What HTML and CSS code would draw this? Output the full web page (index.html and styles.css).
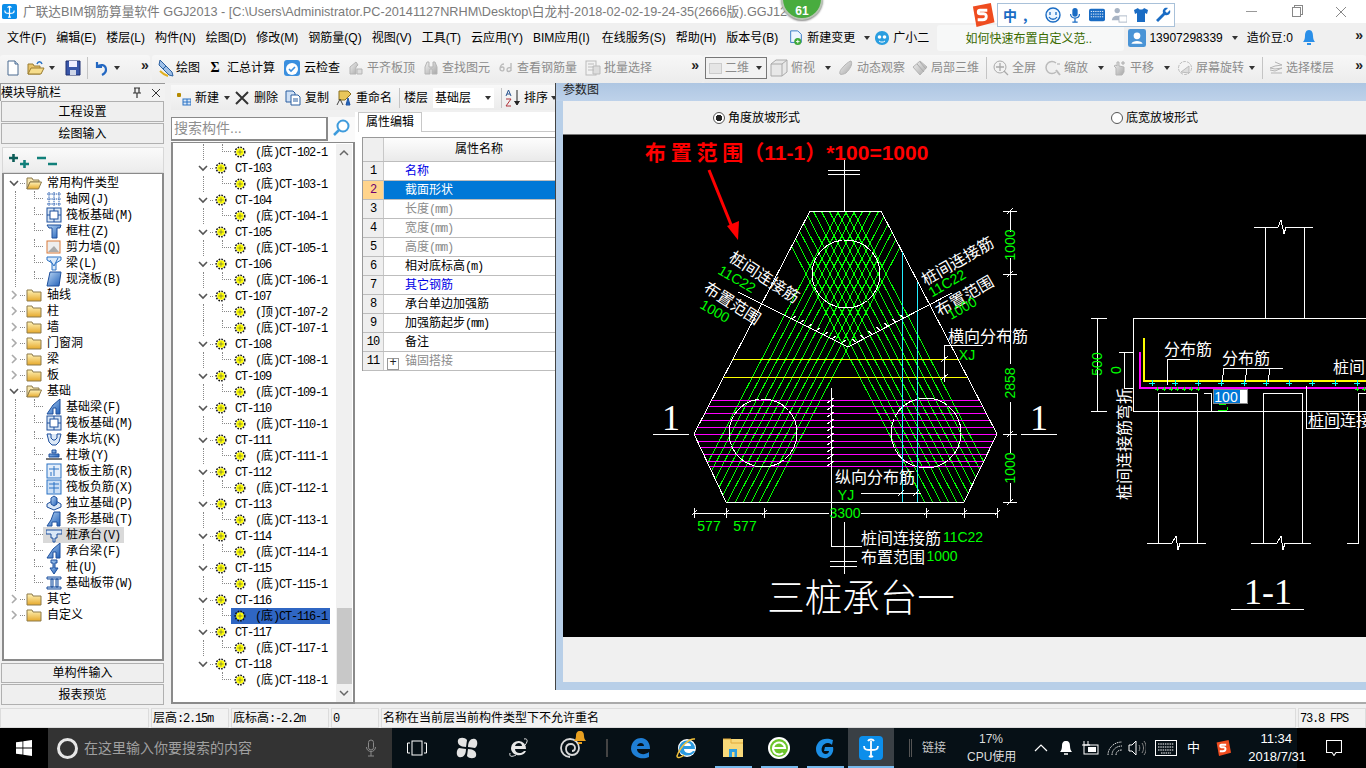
FILE: index.html
```html
<!DOCTYPE html>
<html lang="zh-CN">
<head>
<meta charset="utf-8">
<title>广联达BIM钢筋算量软件 GGJ2013</title>
<link rel="stylesheet" href="styles.css">
</head>
<body>
<svg class="sprite" aria-hidden="true">
  <defs>
    <linearGradient id="gold" x1="0" y1="0" x2="0" y2="1"><stop offset="0" stop-color="#fff3b8"/><stop offset="1" stop-color="#e6a92c"/></linearGradient>
    <linearGradient id="blu" x1="0" y1="0" x2="1" y2="1"><stop offset="0" stop-color="#bcd8f5"/><stop offset="1" stop-color="#1f5fb8"/></linearGradient>
    <linearGradient id="gry" x1="0" y1="0" x2="1" y2="1"><stop offset="0" stop-color="#f0f0f0"/><stop offset="1" stop-color="#a8a8a8"/></linearGradient>
    <symbol id="cd" viewBox="0 0 10 10"><path d="M1 3l4 4 4-4" fill="none" stroke="#555" stroke-width="1.6"/></symbol>
    <symbol id="cr" viewBox="0 0 10 10"><path d="M3 1l4 4-4 4" fill="none" stroke="#aaa" stroke-width="1.6"/></symbol>
    <symbol id="pile" viewBox="0 0 12 12"><circle cx="6" cy="6" r="3.8" fill="#ff0"/><circle cx="6" cy="6" r="4.8" fill="none" stroke="#111" stroke-width="1.5" stroke-dasharray="1.6 1.2"/><path d="M6 3.5v5M3.5 6h5" stroke="#555" stroke-width=".6"/></symbol>
    <symbol id="fold" viewBox="0 0 16 14"><path d="M1 2h5l1 2h8v9H1z" fill="url(#gold)" stroke="#8d7a4a"/></symbol>
    <symbol id="foldo" viewBox="0 0 16 14"><path d="M1 2h5l1 2h6v2H4L1 13z" fill="#f7e7b0" stroke="#8d7a4a"/><path d="M4 6h11.500l-3 7H1z" fill="url(#gold)" stroke="#8d7a4a"/></symbol>
    <symbol id="i-grid" viewBox="0 0 16 16"><path d="M1 3h14M1 8h14M1 13h14M3 1v14M8 1v14M13 1v14" stroke="#2a5fb0" fill="none" stroke-dasharray="1.500 .7"/></symbol>
    <symbol id="i-raft" viewBox="0 0 16 16"><rect x="1" y="1" width="14" height="14" fill="#dbe8f7" stroke="#1d4f9c"/><rect x="4" y="4" width="8" height="8" fill="#fff" stroke="#1d4f9c"/><path d="M8 1v3M8 12v3M1 8h3M12 8h3" stroke="#1d4f9c"/></symbol>
    <symbol id="i-col" viewBox="0 0 16 16"><path d="M1 2h14l-1 3h-3v10H6V5H3z" fill="url(#blu)" stroke="#1d4f9c"/></symbol>
    <symbol id="i-wall" viewBox="0 0 16 16"><rect x="1" y="2" width="13" height="12" fill="#eee" stroke="#d97a3a"/><path d="M2 13l6-6 5 6z" fill="#aaa"/></symbol>
    <symbol id="i-beam" viewBox="0 0 16 16"><path d="M1 2h14v3l-5 3v7H6V8L1 5z" fill="#d9e9fa" stroke="#2a72c4"/><path d="M4 5l4 6M12 3l-4 8" stroke="#2a72c4"/></symbol>
    <symbol id="i-slab" viewBox="0 0 16 16"><path d="M4 1h11l-2 14H1z" fill="url(#blu)" stroke="#1d4f9c"/></symbol>
    <symbol id="i-fb" viewBox="0 0 16 16"><path d="M1 15l6-9 7-6v15h-4V9H7v6z" fill="url(#blu)" stroke="#1d4f9c"/></symbol>
    <symbol id="i-sump" viewBox="0 0 16 16"><path d="M1 3h4v4l2 2h2l2-2V3h4M1 3l2 8 3 3h4l3-3 2-8" fill="#dbe8f7" stroke="#1d4f9c"/></symbol>
    <symbol id="i-pier" viewBox="0 0 16 16"><path d="M6 3h4v3H6zM3 7h10v3H3z" fill="url(#blu)" stroke="#1d4f9c"/><path d="M0 12h16" stroke="#777" stroke-width="2"/></symbol>
    <symbol id="i-rbar" viewBox="0 0 16 16"><rect x="1" y="1" width="14" height="14" fill="#e4eefa" stroke="#2a72c4"/><path d="M3 6h10M8 3v10M5 9v4" stroke="#2a72c4" fill="none"/></symbol>
    <symbol id="i-nbar" viewBox="0 0 16 16"><rect x="1" y="1" width="14" height="14" fill="#cbdff5" stroke="#2a72c4"/><path d="M3 5h10M3 9h10M8 3v11" stroke="#2a72c4" fill="none"/></symbol>
    <symbol id="i-ind" viewBox="0 0 16 16"><path d="M1 9l7-4 7 4v3l-7 3-7-3z" fill="#dbe8f7" stroke="#1d4f9c"/><path d="M5 3l3-2 3 2v6l-3 2-3-2z" fill="url(#blu)" stroke="#1d4f9c"/></symbol>
    <symbol id="i-strip" viewBox="0 0 16 16"><path d="M1 15l4-6 3-8h6v14h-3v-4H6v4z" fill="url(#blu)" stroke="#1d4f9c"/></symbol>
    <symbol id="i-cap" viewBox="0 0 16 16"><path d="M0 3h16v4H11v4H9v4H7v-4H5V7H0z" fill="#dbe8f7" stroke="#1d4f9c"/></symbol>
    <symbol id="i-pil" viewBox="0 0 16 16"><path d="M5 1h6v3h-2v5h3l-4 6-4-6h3V4H5z" fill="url(#blu)" stroke="#1d4f9c"/></symbol>
    <symbol id="i-band" viewBox="0 0 16 16"><path d="M1 2h14v2H1zM1 12h14v2H1zM5 4h2v8H5zM10 4h2v8h-2z" fill="#cfe2f7" stroke="#1d4f9c"/></symbol>
    <symbol id="i-add" viewBox="0 0 16 16"><path d="M2 5h4M4 3v4" stroke="#b58a00" stroke-width="3"/><rect x="8" y="9" width="8" height="6" fill="#dbe8f7" stroke="#2a72c4"/><path d="M8 12h8M12 9v6" stroke="#2a72c4"/></symbol>
    <symbol id="i-cut" viewBox="0 0 16 16"><path d="M2 2l12 12M14 2L2 14" stroke="#333" stroke-width="2"/></symbol>
    <symbol id="i-copy" viewBox="0 0 16 16"><path d="M1 1h7l2 2v9H1z" fill="#cfe0f5" stroke="#2a5fa0"/><path d="M6 5h7l2 2v8H6z" fill="#fff" stroke="#2a5fa0"/><path d="M8 9h5M8 11h5" stroke="#2a5fa0"/></symbol>
    <symbol id="i-ren" viewBox="0 0 16 16"><path d="M3 1h9l3 3-6 6H3z" fill="#e9c75b" stroke="#8a7020"/><path d="M1 15l3-6 3 6" fill="none" stroke="#444"/><path d="M10 15l2-7 2 7zM11 13h2" fill="#2c7ad6" stroke="#1d4f9c"/></symbol>
    <symbol id="i-sort" viewBox="0 0 18 18"><path d="M2 7l2.500-6L7 7M3 5h3" fill="none" stroke="#28548f"/><path d="M2 10h5l-5 7h5" fill="none" stroke="#b0333a"/><path d="M13 1v14M10.500 12l2.500 4 2.500-4" fill="#222" stroke="#222"/></symbol>
    <symbol id="i-new" viewBox="0 0 16 16"><path d="M3 1h7l3 3v11H3z" fill="#fff" stroke="#4a6a90"/><path d="M10 1v3h3" fill="#cde" stroke="#4a6a90"/></symbol>
    <symbol id="i-open" viewBox="0 0 18 16"><path d="M1 4h5l1 2h6v8H1z" fill="#e8c46c" stroke="#9a7c30"/><path d="M4 8h13l-3 6H1z" fill="#f6dd8c" stroke="#9a7c30"/><path d="M10 4c1-3 4-3 5 0" fill="none" stroke="#2a72c4" stroke-width="1.500"/></symbol>
    <symbol id="i-save" viewBox="0 0 16 16"><path d="M1 1h14v14H1z" fill="#3956a8" stroke="#1e2f70"/><rect x="4" y="1" width="8" height="6" fill="#eef"/><rect x="5" y="10" width="6" height="5" fill="#cfd6e8"/></symbol>
    <symbol id="i-undo" viewBox="0 0 16 16"><path d="M3 2v5h5M3 7c3-3 9-3 9 3 0 2-2 4-4 5" fill="none" stroke="#2468c2" stroke-width="2.200"/></symbol>
    <symbol id="i-draw" viewBox="0 0 18 18"><path d="M3 1l6 6-3 3-4-4zM9 7l6 6 1 4-4-1-6-6z" fill="#9fc0e8" stroke="#2a5fa0"/><path d="M3 12c2 2 4 4 8 5" stroke="#e0b020" fill="none" stroke-width="2"/></symbol>
    <symbol id="i-cloud" viewBox="0 0 18 18"><rect x="1" y="1" width="16" height="16" rx="3" fill="#3a8fdf"/><circle cx="9" cy="10" r="6" fill="#fff"/><path d="M6 10l2 2 4-4" fill="none" stroke="#3a8fdf" stroke-width="1.600"/></symbol>
    <symbol id="i-gflat" viewBox="0 0 16 16"><path d="M2 14V7l6-5 2 3-2 2v7z" fill="url(#gry)" stroke="#b5b5b5"/><path d="M9 9h5v5H9z" fill="#ddd" stroke="#b5b5b5"/></symbol>
    <symbol id="i-bino" viewBox="0 0 16 16"><path d="M2 7l2-5h2v5h4V2h2l2 5v7h-5V9H7v5H2z" fill="url(#gry)" stroke="#b5b5b5"/></symbol>
    <symbol id="i-six" viewBox="0 0 16 16"><path d="M6 4c-3 0-4 3-4 5s4 3 4 0-3-2-4-1M13 3v8M13 8c-2-1-4 0-4 2s3 2 4 0" fill="none" stroke="#bbb" stroke-width="1.400"/></symbol>
    <symbol id="i-batch" viewBox="0 0 16 16"><rect x="1" y="1" width="10" height="14" fill="#f2f2f2" stroke="#bbb"/><path d="M3 4h6M3 7h6M3 10h6M8 6h7v8H8z" fill="#ddd" stroke="#bbb"/></symbol>
    <symbol id="i-cube" viewBox="0 0 18 18"><path d="M1 5l5-4h11v12l-5 4H1z" fill="#e8e8e8" stroke="#aaa"/><path d="M1 5h11v12M12 5l5-4" fill="none" stroke="#aaa"/></symbol>
    <symbol id="i-orb" viewBox="0 0 16 16"><path d="M13 1c2 3-1 8-5 12-2 1-5 2-6 1-1-3 2-6 5-9 2-2 5-4 6-4z" fill="url(#gry)" stroke="#b5b5b5"/></symbol>
    <symbol id="i-loc" viewBox="0 0 16 16"><path d="M1 7l7-6 7 6-7 8z" fill="url(#gry)" stroke="#b5b5b5"/><path d="M5 4l7 8M8 2l6 7" stroke="#aaa"/></symbol>
    <symbol id="i-full" viewBox="0 0 16 16"><circle cx="7" cy="7" r="6" fill="#f2f2f2" stroke="#aaa"/><path d="M7 3v8M3 7h8M11 11l4 4" stroke="#aaa" stroke-width="1.300"/></symbol>
    <symbol id="i-zoom" viewBox="0 0 16 16"><path d="M11 3a6 6 0 1 0 0 9" fill="#f0f0f0" stroke="#bbb" stroke-width="1.500"/><path d="M11 10l4 5" stroke="#bbb" stroke-width="2"/><path d="M12 4h3" stroke="#aaa"/></symbol>
    <symbol id="i-pan" viewBox="0 0 16 16"><path d="M5 15V8L3 6l2-1 1 1V2h2v4l5 1v5l-2 3z" fill="url(#gry)" stroke="#b5b5b5"/><path d="M12 1v4M10 3h4" stroke="#aaa"/></symbol>
    <symbol id="i-rot" viewBox="0 0 16 16"><circle cx="8" cy="8" r="6.500" fill="#f4f4f4" stroke="#bbb" stroke-dasharray="3 1"/><path d="M4 12l8-6v7z" fill="#ddd" stroke="#bbb"/></symbol>
    <symbol id="i-floor" viewBox="0 0 14 14"><path d="M6 1l7 3-7 1-5 2 5 1 7-1-7 3-5-1M2 12h11" fill="none" stroke="#b5b5b5"/></symbol>
    <symbol id="i-win" viewBox="0 0 16 16"><path d="M0 2.300l6.500-.9v6.200H0zM7.300 1.300L16 0v7.600H7.300zM0 8.400h6.500v6.200L0 13.700zM7.300 8.400H16V16l-8.700-1.300z" fill="#fff"/></symbol>
    <symbol id="i-mic" viewBox="0 0 12 18"><rect x="3.500" y="1" width="5" height="10" rx="2.500" fill="none" stroke="#8a8a8a"/><path d="M1.500 8c0 6 9 6 9 0M6 13v4M3 17h6" fill="none" stroke="#8a8a8a"/></symbol>
    <symbol id="i-tv" viewBox="0 0 20 16"><rect x="5" y="1" width="10" height="14" fill="none" stroke="#fff"/><path d="M3 3H.500v10H3M17 3h2.500v10H17" fill="none" stroke="#fff"/></symbol>
    <symbol id="i-pin" viewBox="0 0 22 22"><g fill="#e4e4e4"><path d="M10 10C4 10 1 7 2 3c1-3 7-3 9 0z"/><path d="M12 10c0-6 3-9 7-8 3 1 3 7 0 9z"/><path d="M12 12c6 0 9 3 8 7-1 3-7 3-9 0z"/><path d="M10 12c0 6-3 9-7 8-3-1-3-7 0-9z"/></g></symbol>
    <symbol id="i-ie" viewBox="0 0 22 22"><path d="M4 11a7.500 7.500 0 1 1 15 1H8c0 5 7 5 9 2h2c-3 7-15 5-15-3zM8 9h7c0-4-6-4-7 0z" fill="#e8e8e8"/><path d="M17 2c4-1 4 3 1 6M3 16c-1 4 2 4 6 2" fill="none" stroke="#e8e8e8"/></symbol>
    <symbol id="i-spi" viewBox="0 0 22 22"><path d="M11 20a9 9 0 1 1 9-9c0 4-3 7-7 7a6 6 0 0 1-6-6c0-3 2-5 5-5a4 4 0 0 1 4 4c0 2-1 3-3 3" fill="none" stroke="#d8d8d8" stroke-width="1.800"/></symbol>
    <symbol id="i-gbell" viewBox="0 0 12 14"><path d="M6 0c3 0 4 2 4 5 0 2 1 4 2 5H0c1-1 2-3 2-5 0-3 1-5 4-5z" fill="#e8a020"/><path d="M4 12h4" stroke="#e8a020" stroke-width="2"/></symbol>
    <symbol id="i-edge" viewBox="0 0 22 22"><path d="M2 12C2 4 8 1 12 1c6 0 9 5 9 11H8c0 5 7 7 12 3v5c-6 3-17 1-18-8zM8 9h7c0-4-6-4-7 0z" fill="#1f7fd6"/></symbol>
    <symbol id="i-ie2" viewBox="0 0 24 24"><circle cx="12" cy="12" r="9" fill="#fff"/><path d="M4 12a8 8 0 1 1 16 1H9c0 5 7 5 9 2h2c-3 7-16 6-16-3zM9 10h7c0-4-6-4-7 0z" fill="#2b9ae0"/><path d="M20 3c-5-1-14 6-18 17 0 3 5 1 7-1" fill="none" stroke="#f3c23a" stroke-width="1.500"/></symbol>
    <symbol id="i-exp" viewBox="0 0 22 22"><path d="M1 2h20v18H1z" fill="#f7d97a"/><path d="M1 2h8v4h12" fill="none" stroke="#e0a93a"/><rect x="7" y="12" width="8" height="8" fill="#2a9ee0"/><rect x="10" y="15" width="2.500" height="5" fill="#f7d97a"/></symbol>
    <symbol id="i-gre" viewBox="0 0 24 24"><circle cx="12" cy="12" r="11" fill="#fff"/><circle cx="12" cy="12" r="9" fill="#6cc52c"/><path d="M6 12h12a6 6 0 1 0-2 5" fill="none" stroke="#fff" stroke-width="2.200"/></symbol>
    <symbol id="i-g" viewBox="0 0 24 24"><path d="M20 4C10 0 3 6 3 13c0 7 6 10 11 9 5-2 7-7 6-11h-8l-1 4h5c0 3-4 4-6 2-3-3-1-10 5-10 2 0 3 1 4 2z" fill="#1c8fe6"/></symbol>
    <symbol id="i-glod" viewBox="0 0 24 24"><rect x="0" y="0" width="24" height="24" rx="4" fill="#0c8eea"/><path d="M5 10c0 4 3 4 7 4s7 0 7-4M12 5v15M10 20a3 3 0 0 0 4 0" fill="none" stroke="#fff" stroke-width="1.800"/><path d="M9 5c1-2 5-2 6 0" fill="none" stroke="#fff" stroke-width="1.800"/></symbol>
    <symbol id="i-up" viewBox="0 0 14 10"><path d="M1 8l6-6 6 6" fill="none" stroke="#fff" stroke-width="1.200"/></symbol>
    <symbol id="i-bell" viewBox="0 0 14 16"><path d="M7 1c3 0 4 2 4 5 0 3 1 5 2 6H1c1-1 2-3 2-6 0-3 1-5 4-5z" fill="#fff"/><path d="M5 14h4" stroke="#fff" stroke-width="1.500"/></symbol>
    <symbol id="i-batt" viewBox="0 0 18 16"><rect x="3" y="5" width="14" height="9" fill="none" stroke="#fff"/><rect x="7" y="7" width="8" height="5" fill="#fff"/><path d="M3 1v4M7 1v4M1 5h8" stroke="#fff"/></symbol>
    <symbol id="i-wifi" viewBox="0 0 18 16"><g fill="none" stroke="#ddd" stroke-dasharray="1.500 .8"><path d="M1 15c0-7 6-13 14-13"/><path d="M5 15c0-5 4-9 10-9"/><path d="M9 15c0-3 2-5 6-5"/></g></symbol>
    <symbol id="i-vol" viewBox="0 0 18 16"><path d="M1 5h3l4-4v14l-4-4H1z" fill="none" stroke="#fff"/><path d="M11 5c1 2 1 4 0 6M14 3c2 3 2 7 0 10M16 1c3 4 3 10 0 14" fill="none" stroke="#888"/></symbol>
    <symbol id="i-kb" viewBox="0 0 22 16"><rect x=".5" y=".5" width="21" height="15" fill="none" stroke="#fff"/><path d="M3 4h16M3 7h16M3 10h16M6 13h10" stroke="#fff" stroke-dasharray="1.500 .8"/></symbol>
    <symbol id="i-s" viewBox="0 0 20 20"><path d="M2 3l15-3 3 16-15 4z" fill="#ef4c1f"/><path d="M14 6H8c-2 0-2 3 0 3h3c3 0 3 5-1 5H6" fill="none" stroke="#fff" stroke-width="2.400"/></symbol>
    <symbol id="i-note" viewBox="0 0 16 16"><path d="M.5.500h15v12H10l-2 3-2-3H.500z" fill="none" stroke="#fff" stroke-width="1.100"/></symbol>
    <symbol id="i-logo" viewBox="0 0 16 16"><rect width="16" height="16" rx="2" fill="#0c8eea"/><path d="M3 7c0 3 2 3 5 3s5 0 5-3M8 3v11M6.500 14h3M6 4c1-2 3-2 4 0" fill="none" stroke="#fff" stroke-width="1.300"/></symbol>
    <symbol id="i-file" viewBox="0 0 14 18"><path d="M1 1h8l4 4v9H1z" fill="#eef5ff" stroke="#2a72c4"/><circle cx="9" cy="13" r="4" fill="#3fa83a"/><path d="M7 13h4M9 11v4" stroke="#fff"/></symbol>
    <symbol id="i-xiao" viewBox="0 0 16 16"><path d="M8 1c4 0 7 3 7 7s-3 7-7 7-7-3-7-7 3-7 7-7z" fill="#2a9ee0"/><circle cx="5.500" cy="7" r="1.800" fill="#fff"/><circle cx="10.500" cy="7" r="1.800" fill="#fff"/><path d="M5 11c2 1.500 4 1.500 6 0" fill="none" stroke="#fff"/></symbol>
    <symbol id="i-ava" viewBox="0 0 16 16"><rect width="16" height="16" rx="2" fill="#4a94d6"/><circle cx="8" cy="6" r="3" fill="#fff"/><path d="M3 13c1-3 9-3 10 0z" fill="#fff"/></symbol>
    <symbol id="i-bl" viewBox="0 0 12 16"><path d="M6 0c3 0 4 3 4 6 0 3 1 5 2 6H0c1-1 2-3 2-6 0-3 1-6 4-6z" fill="#2a8fe8"/><path d="M4 14h4" stroke="#2a8fe8" stroke-width="2"/></symbol>
    <symbol id="i-mag" viewBox="0 0 18 18"><circle cx="11" cy="7" r="5.500" fill="#fff" stroke="#3e9bdc" stroke-width="2"/><path d="M7 11l-5 5" stroke="#3e9bdc" stroke-width="2.500"/></symbol>
    <symbol id="i-plus" viewBox="0 0 22 16"><path d="M1 5h9M5.500 1v8" stroke="#0d5d58" stroke-width="2.600"/><path d="M12 11h9M16.500 7v8" stroke="#11807a" stroke-width="2.600"/></symbol>
    <symbol id="i-minus" viewBox="0 0 22 16"><path d="M1 5h9M12 11h9" stroke="#11807a" stroke-width="2.600"/></symbol>
    <symbol id="i-pin2" viewBox="0 0 12 12"><path d="M3 1h6M4 1v5M8 1v5M2 6h8M6 6v5" fill="none" stroke="#333" stroke-width="1.200"/></symbol>
    <symbol id="i-x" viewBox="0 0 12 12"><path d="M2 2l8 8M10 2l-8 8" stroke="#333"/></symbol>
    <symbol id="i-shirt" viewBox="0 0 16 16"><path d="M5 1L1 3l1 4 2-1v9h8V6l2 1 1-4-4-2c-1 2-5 2-6 0z" fill="#1a6cc4"/></symbol>
    <symbol id="i-wr" viewBox="0 0 16 16"><path d="M15 3l-3 3-2-2 3-3c-3-1-6 1-5 5L1 13l2 2 7-7c4 1 6-2 5-5z" fill="#1a6cc4"/></symbol>
    <symbol id="i-smile" viewBox="0 0 16 16"><circle cx="8" cy="8" r="7" fill="#eef6ff" stroke="#1a6cc4" stroke-width="1.400"/><path d="M5 5v3M11 5v3M4 10c2 3 6 3 8 0" fill="none" stroke="#1a6cc4" stroke-width="1.300"/></symbol>
    <symbol id="i-mic2" viewBox="0 0 12 18"><rect x="3" y="1" width="6" height="10" rx="3" fill="#1a6cc4"/><path d="M1 8c0 6 10 6 10 0M6 13v4M3 17h6" fill="none" stroke="#1a6cc4" stroke-width="1.400"/></symbol>
    <symbol id="i-kb2" viewBox="0 0 18 14"><rect x="0" y="0" width="18" height="14" rx="2" fill="#1a6cc4"/><path d="M2 3h14M2 6h14M2 9h14" stroke="#fff" stroke-dasharray="1.500 1"/></symbol>
    <symbol id="i-per" viewBox="0 0 18 18"><circle cx="7" cy="4" r="3" fill="#a8b4c4"/><path d="M1 15c0-7 11-7 11 0z" fill="#a8b4c4"/><rect x="9" y="10" width="9" height="7" fill="#fff" stroke="#a8b4c4"/></symbol>
  </defs>
</svg>

<div class="app">
  <header class="titlebar">
    <svg class="logo"><use href="#i-logo"/></svg>
    <span class="ttl">广联达BIM钢筋算量软件 GGJ2013 - [C:\Users\Administrator.PC-20141127NRHM\Desktop\白龙村-2018-02-02-19-24-35(2666版).GGJ12</span>
    <div class="wctl">
      <span class="wmin"></span><span class="wmax"></span><svg class="wx" viewBox="0 0 10 10"><path d="M0 0l10 10M10 0L0 10" stroke="#888"/></svg>
    </div>
  </header>

  <nav class="menubar">
    <span>文件(F)</span><span>编辑(E)</span><span>楼层(L)</span><span>构件(N)</span><span>绘图(D)</span><span>修改(M)</span><span>钢筋量(Q)</span><span>视图(V)</span><span>工具(T)</span><span>云应用(Y)</span><span>BIM应用(I)</span><span class="m-svc">在线服务(S)</span><span>帮助(H)</span><span>版本号(B)</span>
    <span class="ti"><svg class="ic16"><use href="#i-file"/></svg>新建变更<b class="caret"></b></span>
    <span class="ti m-xiao"><svg class="ic16"><use href="#i-xiao"/></svg>广小二</span>
    <div class="news">如何快速布置自定义范..</div>
    <span class="ti"><svg class="ic18"><use href="#i-ava"/></svg>13907298339<b class="caret"></b></span>
    <span class="bean">造价豆:0</span>
    <svg class="ic-bl"><use href="#i-bl"/></svg>
    <span class="more more-m">»</span>
  </nav>

  <div class="toolbar">
    <div class="tbgroup tg1">
      <svg class="ic16"><use href="#i-new"/></svg>
      <svg class="ic18"><use href="#i-open"/></svg><b class="caret c0"></b>
      <svg class="ic16 save"><use href="#i-save"/></svg>
      <i class="sep"></i>
      <svg class="ic16"><use href="#i-undo"/></svg><b class="caret c0"></b>
      <span class="more more-a">»</span>
    </div>
    <div class="tbgroup tg2">
      <span class="ti t-first"><svg class="ic18"><use href="#i-draw"/></svg>绘图</span>
      <span class="ti sig"><em>Σ</em>汇总计算</span>
      <span class="ti"><svg class="ic18"><use href="#i-cloud"/></svg>云检查</span>
      <span class="ti off"><svg class="ic16"><use href="#i-gflat"/></svg>平齐板顶</span>
      <span class="ti off"><svg class="ic16"><use href="#i-bino"/></svg>查找图元</span>
      <span class="ti off"><svg class="ic16"><use href="#i-six"/></svg>查看钢筋量</span>
      <span class="ti off"><svg class="ic16"><use href="#i-batch"/></svg>批量选择</span>
      <span class="more more-b">»</span>
    </div>
    <div class="tbgroup tg3">
      <div class="combo"><i class="sq"></i>二维<b class="caret"></b></div>
      <span class="ti off"><svg class="ic18"><use href="#i-cube"/></svg>俯视<b class="caret"></b></span>
      <span class="ti off"><svg class="ic16"><use href="#i-orb"/></svg>动态观察</span>
      <span class="ti off"><svg class="ic16"><use href="#i-loc"/></svg>局部三维</span>
      <i class="sep"></i>
      <span class="ti off"><svg class="ic16"><use href="#i-full"/></svg>全屏</span>
      <span class="ti off zm"><svg class="ic16"><use href="#i-zoom"/></svg>缩放<b class="caret"></b></span>
      <span class="ti off"><svg class="ic16"><use href="#i-pan"/></svg>平移<b class="caret"></b></span>
      <span class="ti off"><svg class="ic16"><use href="#i-rot"/></svg>屏幕旋转<b class="caret ca2"></b></span>
      <i class="sep"></i>
      <span class="ti off"><svg class="ic14"><use href="#i-floor"/></svg>选择楼层</span>
      <span class="more more-c">»</span>
    </div>
  </div>

  <main class="workspace">
    <aside class="nav">
      <div class="navhead"><span>模块导航栏</span><svg class="ic12 pin"><use href="#i-pin2"/></svg><svg class="ic12"><use href="#i-x"/></svg></div>
      <button class="navbtn">工程设置</button>
      <button class="navbtn">绘图输入</button>
      <div class="navtools"><svg class="ic-pm"><use href="#i-plus"/></svg><svg class="ic-pm"><use href="#i-minus"/></svg></div>
      <div class="tree ltree">
        <div class="lr"><svg class="chev"><use href="#cd"/></svg><i class="stub"></i><svg class="fold"><use href="#foldo"/></svg><span>常用构件类型</span></div>
        <div class="lc"><i class="guide"></i><i class="elbow"></i><div class="lbl"><svg class="ic16"><use href="#i-grid"/></svg><span>轴网<i>(J)</i></span></div></div>
        <div class="lc"><i class="guide"></i><i class="elbow"></i><div class="lbl"><svg class="ic16"><use href="#i-raft"/></svg><span>筏板基础<i>(M)</i></span></div></div>
        <div class="lc"><i class="guide"></i><i class="elbow"></i><div class="lbl"><svg class="ic16"><use href="#i-col"/></svg><span>框柱<i>(Z)</i></span></div></div>
        <div class="lc"><i class="guide"></i><i class="elbow"></i><div class="lbl"><svg class="ic16"><use href="#i-wall"/></svg><span>剪力墙<i>(Q)</i></span></div></div>
        <div class="lc"><i class="guide"></i><i class="elbow"></i><div class="lbl"><svg class="ic16"><use href="#i-beam"/></svg><span>梁<i>(L)</i></span></div></div>
        <div class="lc"><i class="guide"></i><i class="elbow"></i><div class="lbl"><svg class="ic16"><use href="#i-slab"/></svg><span>现浇板<i>(B)</i></span></div></div>
        <div class="lr"><svg class="chev"><use href="#cr"/></svg><i class="stub"></i><svg class="fold"><use href="#fold"/></svg><span>轴线</span></div>
        <div class="lr"><svg class="chev"><use href="#cr"/></svg><i class="stub"></i><svg class="fold"><use href="#fold"/></svg><span>柱</span></div>
        <div class="lr"><svg class="chev"><use href="#cr"/></svg><i class="stub"></i><svg class="fold"><use href="#fold"/></svg><span>墙</span></div>
        <div class="lr"><svg class="chev"><use href="#cr"/></svg><i class="stub"></i><svg class="fold"><use href="#fold"/></svg><span>门窗洞</span></div>
        <div class="lr"><svg class="chev"><use href="#cr"/></svg><i class="stub"></i><svg class="fold"><use href="#fold"/></svg><span>梁</span></div>
        <div class="lr"><svg class="chev"><use href="#cr"/></svg><i class="stub"></i><svg class="fold"><use href="#fold"/></svg><span>板</span></div>
        <div class="lr"><svg class="chev"><use href="#cd"/></svg><i class="stub"></i><svg class="fold"><use href="#foldo"/></svg><span>基础</span></div>
        <div class="lc"><i class="guide"></i><i class="elbow"></i><div class="lbl"><svg class="ic16"><use href="#i-fb"/></svg><span>基础梁<i>(F)</i></span></div></div>
        <div class="lc"><i class="guide"></i><i class="elbow"></i><div class="lbl"><svg class="ic16"><use href="#i-raft"/></svg><span>筏板基础<i>(M)</i></span></div></div>
        <div class="lc"><i class="guide"></i><i class="elbow"></i><div class="lbl"><svg class="ic16"><use href="#i-sump"/></svg><span>集水坑<i>(K)</i></span></div></div>
        <div class="lc"><i class="guide"></i><i class="elbow"></i><div class="lbl"><svg class="ic16"><use href="#i-pier"/></svg><span>柱墩<i>(Y)</i></span></div></div>
        <div class="lc"><i class="guide"></i><i class="elbow"></i><div class="lbl"><svg class="ic16"><use href="#i-rbar"/></svg><span>筏板主筋<i>(R)</i></span></div></div>
        <div class="lc"><i class="guide"></i><i class="elbow"></i><div class="lbl"><svg class="ic16"><use href="#i-nbar"/></svg><span>筏板负筋<i>(X)</i></span></div></div>
        <div class="lc"><i class="guide"></i><i class="elbow"></i><div class="lbl"><svg class="ic16"><use href="#i-ind"/></svg><span>独立基础<i>(P)</i></span></div></div>
        <div class="lc"><i class="guide"></i><i class="elbow"></i><div class="lbl"><svg class="ic16"><use href="#i-strip"/></svg><span>条形基础<i>(T)</i></span></div></div>
        <div class="lc"><i class="guide"></i><i class="elbow"></i><div class="lbl hov"><svg class="ic16"><use href="#i-cap"/></svg><span>桩承台<i>(V)</i></span></div></div>
        <div class="lc"><i class="guide"></i><i class="elbow"></i><div class="lbl"><svg class="ic16"><use href="#i-fb"/></svg><span>承台梁<i>(F)</i></span></div></div>
        <div class="lc"><i class="guide"></i><i class="elbow"></i><div class="lbl"><svg class="ic16"><use href="#i-pil"/></svg><span>桩<i>(U)</i></span></div></div>
        <div class="lc"><i class="guide"></i><i class="elbow"></i><div class="lbl"><svg class="ic16"><use href="#i-band"/></svg><span>基础板带<i>(W)</i></span></div></div>
        <div class="lr"><svg class="chev"><use href="#cr"/></svg><i class="stub"></i><svg class="fold"><use href="#fold"/></svg><span>其它</span></div>
        <div class="lr"><svg class="chev"><use href="#cr"/></svg><i class="stub"></i><svg class="fold"><use href="#fold"/></svg><span>自定义</span></div>
      </div>
      <button class="navbtn b1">单构件输入</button>
      <button class="navbtn">报表预览</button>
    </aside>

    <section class="mid">
      <div class="midtools">
        <span class="ti"><svg class="ic16"><use href="#i-add"/></svg>新建<b class="caret"></b></span>
        <span class="ti"><svg class="ic16"><use href="#i-cut"/></svg>删除</span>
        <span class="ti"><svg class="ic16"><use href="#i-copy"/></svg>复制</span>
        <span class="ti"><svg class="ic16"><use href="#i-ren"/></svg>重命名</span>
        <i class="sep"></i>
        <span>楼层</span>
        <div class="floorbox">基础层<b class="caret"></b></div>
        <i class="sep"></i>
        <span class="ti"><svg class="ic18"><use href="#i-sort"/></svg>排序<b class="caret"></b></span>
      </div>
      <div class="midbody">
        <div class="compcol">
          <div class="searchrow"><div class="search">搜索构件...</div><svg class="ic-mag"><use href="#i-mag"/></svg></div>
          <div class="tree ctree">
            <div class="rows">
              <div class="cc"><i class="guide"></i><i class="elbow"></i><div class="lbl"><svg class="ic12t"><use href="#pile"/></svg><span><i>(</i>底<i>)CT-102-1</i></span></div></div>
              <div class="cp"><svg class="chev"><use href="#cd"/></svg><i class="stub"></i><svg class="ic12t"><use href="#pile"/></svg><span><i>CT-103</i></span></div>
              <div class="cc"><i class="guide"></i><i class="elbow"></i><div class="lbl"><svg class="ic12t"><use href="#pile"/></svg><span><i>(</i>底<i>)CT-103-1</i></span></div></div>
              <div class="cp"><svg class="chev"><use href="#cd"/></svg><i class="stub"></i><svg class="ic12t"><use href="#pile"/></svg><span><i>CT-104</i></span></div>
              <div class="cc"><i class="guide"></i><i class="elbow"></i><div class="lbl"><svg class="ic12t"><use href="#pile"/></svg><span><i>(</i>底<i>)CT-104-1</i></span></div></div>
              <div class="cp"><svg class="chev"><use href="#cd"/></svg><i class="stub"></i><svg class="ic12t"><use href="#pile"/></svg><span><i>CT-105</i></span></div>
              <div class="cc"><i class="guide"></i><i class="elbow"></i><div class="lbl"><svg class="ic12t"><use href="#pile"/></svg><span><i>(</i>底<i>)CT-105-1</i></span></div></div>
              <div class="cp"><svg class="chev"><use href="#cd"/></svg><i class="stub"></i><svg class="ic12t"><use href="#pile"/></svg><span><i>CT-106</i></span></div>
              <div class="cc"><i class="guide"></i><i class="elbow"></i><div class="lbl"><svg class="ic12t"><use href="#pile"/></svg><span><i>(</i>底<i>)CT-106-1</i></span></div></div>
              <div class="cp"><svg class="chev"><use href="#cd"/></svg><i class="stub"></i><svg class="ic12t"><use href="#pile"/></svg><span><i>CT-107</i></span></div>
              <div class="cc"><i class="guide"></i><i class="elbow"></i><div class="lbl"><svg class="ic12t"><use href="#pile"/></svg><span><i>(</i>顶<i>)CT-107-2</i></span></div></div>
              <div class="cc"><i class="guide"></i><i class="elbow"></i><div class="lbl"><svg class="ic12t"><use href="#pile"/></svg><span><i>(</i>底<i>)CT-107-1</i></span></div></div>
              <div class="cp"><svg class="chev"><use href="#cd"/></svg><i class="stub"></i><svg class="ic12t"><use href="#pile"/></svg><span><i>CT-108</i></span></div>
              <div class="cc"><i class="guide"></i><i class="elbow"></i><div class="lbl"><svg class="ic12t"><use href="#pile"/></svg><span><i>(</i>底<i>)CT-108-1</i></span></div></div>
              <div class="cp"><svg class="chev"><use href="#cd"/></svg><i class="stub"></i><svg class="ic12t"><use href="#pile"/></svg><span><i>CT-109</i></span></div>
              <div class="cc"><i class="guide"></i><i class="elbow"></i><div class="lbl"><svg class="ic12t"><use href="#pile"/></svg><span><i>(</i>底<i>)CT-109-1</i></span></div></div>
              <div class="cp"><svg class="chev"><use href="#cd"/></svg><i class="stub"></i><svg class="ic12t"><use href="#pile"/></svg><span><i>CT-110</i></span></div>
              <div class="cc"><i class="guide"></i><i class="elbow"></i><div class="lbl"><svg class="ic12t"><use href="#pile"/></svg><span><i>(</i>底<i>)CT-110-1</i></span></div></div>
              <div class="cp"><svg class="chev"><use href="#cd"/></svg><i class="stub"></i><svg class="ic12t"><use href="#pile"/></svg><span><i>CT-111</i></span></div>
              <div class="cc"><i class="guide"></i><i class="elbow"></i><div class="lbl"><svg class="ic12t"><use href="#pile"/></svg><span><i>(</i>底<i>)CT-111-1</i></span></div></div>
              <div class="cp"><svg class="chev"><use href="#cd"/></svg><i class="stub"></i><svg class="ic12t"><use href="#pile"/></svg><span><i>CT-112</i></span></div>
              <div class="cc"><i class="guide"></i><i class="elbow"></i><div class="lbl"><svg class="ic12t"><use href="#pile"/></svg><span><i>(</i>底<i>)CT-112-1</i></span></div></div>
              <div class="cp"><svg class="chev"><use href="#cd"/></svg><i class="stub"></i><svg class="ic12t"><use href="#pile"/></svg><span><i>CT-113</i></span></div>
              <div class="cc"><i class="guide"></i><i class="elbow"></i><div class="lbl"><svg class="ic12t"><use href="#pile"/></svg><span><i>(</i>底<i>)CT-113-1</i></span></div></div>
              <div class="cp"><svg class="chev"><use href="#cd"/></svg><i class="stub"></i><svg class="ic12t"><use href="#pile"/></svg><span><i>CT-114</i></span></div>
              <div class="cc"><i class="guide"></i><i class="elbow"></i><div class="lbl"><svg class="ic12t"><use href="#pile"/></svg><span><i>(</i>底<i>)CT-114-1</i></span></div></div>
              <div class="cp"><svg class="chev"><use href="#cd"/></svg><i class="stub"></i><svg class="ic12t"><use href="#pile"/></svg><span><i>CT-115</i></span></div>
              <div class="cc"><i class="guide"></i><i class="elbow"></i><div class="lbl"><svg class="ic12t"><use href="#pile"/></svg><span><i>(</i>底<i>)CT-115-1</i></span></div></div>
              <div class="cp"><svg class="chev"><use href="#cd"/></svg><i class="stub"></i><svg class="ic12t"><use href="#pile"/></svg><span><i>CT-116</i></span></div>
              <div class="cc"><i class="guide"></i><i class="elbow"></i><div class="lbl sel"><svg class="ic12t"><use href="#pile"/></svg><span><i>(</i>底<i>)CT-116-1</i></span></div></div>
              <div class="cp"><svg class="chev"><use href="#cd"/></svg><i class="stub"></i><svg class="ic12t"><use href="#pile"/></svg><span><i>CT-117</i></span></div>
              <div class="cc"><i class="guide"></i><i class="elbow"></i><div class="lbl"><svg class="ic12t"><use href="#pile"/></svg><span><i>(</i>底<i>)CT-117-1</i></span></div></div>
              <div class="cp"><svg class="chev"><use href="#cd"/></svg><i class="stub"></i><svg class="ic12t"><use href="#pile"/></svg><span><i>CT-118</i></span></div>
              <div class="cc last"><i class="guide"></i><i class="elbow"></i><div class="lbl"><svg class="ic12t"><use href="#pile"/></svg><span><i>(</i>底<i>)CT-118-1</i></span></div></div>
            </div>
            <div class="vscroll">
              <svg class="sa" viewBox="0 0 10 8"><path d="M1 6l4-4 4 4" fill="none" stroke="#666" stroke-width="1.500"/></svg>
              <div class="thumb"></div>
              <svg class="sa" viewBox="0 0 10 8"><path d="M1 2l4 4 4-4" fill="none" stroke="#666" stroke-width="1.500"/></svg>
            </div>
          </div>
        </div>
        <div class="props">
          <div class="tabbar"><div class="tab">属性编辑</div></div>
          <div class="grid">
            <div class="gh"><span class="n"></span><span class="t">属性名称</span></div>
            <div class="gr"><span class="n">1</span><span class="t link">名称</span></div>
            <div class="gr cur"><span class="n">2</span><span class="t">截面形状</span></div>
            <div class="gr"><span class="n">3</span><span class="t dis">长度<i>(mm)</i></span></div>
            <div class="gr"><span class="n">4</span><span class="t dis">宽度<i>(mm)</i></span></div>
            <div class="gr"><span class="n">5</span><span class="t dis">高度<i>(mm)</i></span></div>
            <div class="gr"><span class="n">6</span><span class="t">相对底标高<i>(m)</i></span></div>
            <div class="gr"><span class="n">7</span><span class="t link">其它钢筋</span></div>
            <div class="gr"><span class="n">8</span><span class="t">承台单边加强筋</span></div>
            <div class="gr"><span class="n">9</span><span class="t">加强筋起步<i>(mm)</i></span></div>
            <div class="gr"><span class="n">10</span><span class="t">备注</span></div>
            <div class="gr"><span class="n">11</span><span class="t dis"><b class="pbox">+</b>锚固搭接</span></div>
          </div>
        </div>
      </div>
    </section>

    <div class="dialog">
      <div class="dlgtitle">参数图</div>
      <div class="dlgbody">
        <div class="radios">
          <label class="rad on"><i></i>角度放坡形式</label>
          <label class="rad r2"><i></i>底宽放坡形式</label>
        </div>
        <svg class="cad" viewBox="563 135 803 502" width="803" height="502">
          <defs><clipPath id="hex"><polygon points="810,211 881,211 997,434 964,502 726,502 694,434"/></clipPath></defs>
          <g clip-path="url(#hex)">
            <path class="hat" d="M838.800 211L687.400 502M846.800 211L695.400 502M854.800 211L703.400 502M862.800 211L711.400 502M870.800 211L719.400 502M878.800 211L727.400 502M886.800 211L735.400 502M894.800 211L743.400 502M902.800 211L751.400 502M910.800 211L759.400 502M918.800 211L767.400 502"/>
            <path class="hat" d="M773.200 211L924.600 502M781.200 211L932.600 502M789.200 211L940.600 502M797.200 211L948.600 502M805.200 211L956.600 502M813.200 211L964.600 502M821.200 211L972.600 502M829.200 211L980.600 502M837.200 211L988.600 502M845.200 211L996.600 502M853.200 211L1004.600 502"/>
            <path class="yel" d="M700 359.500H990M700 377.500H990"/>
            <path class="mag" d="M690 400.500H1000M690 406.500H1000M690 413.500H1000M690 420.500H1000M690 427.500H1000M690 434.500H1000M690 441.500H1000M690 447.500H1000M690 454.500H1000M690 461.500H1000M690 466.500H1000"/>
          </g>
          <polygon class="ln" points="810,211 881,211 997,434 964,502 726,502 694,434"/>
          <circle class="ln dashc" cx="846" cy="274" r="34"/>
          <circle class="ln dashc" cx="763" cy="433" r="34"/>
          <circle class="ln dashc" cx="926" cy="433" r="35"/>
          <path class="cy" d="M902 252V502M917 282V502"/>
          <path class="ln" d="M844 160V211M828 170H860M828 174H860"/>
          <path class="ln" d="M738 292L848 347L952 293"/>
          <path class="ln" d="M792 319l4-3M800 323l4-3M808 327l4-3M816 331l4-3M824 335l4-3M832 339l4-3M842 343l4-3M856 342l-4-3M864 338l-4-3M872 334l-4-3M880 330l-4-3M888 326l-4-3M896 322l-4-3M904 318l-4-3"/>
          <path class="ln" d="M831 388V546H862M827 403l7-5M827 410l7-5M827 417l7-5M827 424l7-5M827 431l7-5M827 438l7-5M827 445l7-5M827 452l7-5M827 459l7-5M827 466l7-5"/>
          <path class="ln" d="M844 522V574M830 561H857M830 566H857"/>
          <path class="ln" d="M861 493H921M898 496l6-6M913 496l6-6"/>
          <path class="ln" d="M1010 211V232M1010 258V364M1010 402V453M1010 483V502M1003 211H1017M1003 274H1017M1003 434H1017M1003 502H1017M1007 214l6-6M1007 277l6-6M1007 437l6-6M1007 505l6-6"/>
          <path class="ln" d="M694 513H829M861 513H997M694 508V518M726 508V518M764 508V518M926 508V518M964 508V518M997 508V518M692 515l5-5M724 515l5-5M762 515l5-5M924 515l5-5M962 515l5-5M995 515l5-5"/>
          <path class="ln" d="M944 382V345H983M941 362l7-6M941 380l7-6"/>
          <path class="ln" d="M653 434H689M1021 434H1057"/>
          <path class="red" d="M709 170L734 232"/>
          <polygon class="redf" points="738,240 727,226 739,221"/>
          <text class="t-red" x="645" y="160">布 置 范 围（<tspan class="lat-b">11-1</tspan>）<tspan class="lat-b">*100=1000</tspan></text>
          <text class="lb c" x="765" y="276" transform="rotate(33 765 276)">桩间连接筋</text>
          <text class="gn c" x="737" y="279" transform="rotate(30 737 279)">11C22</text>
          <text class="lb c" x="733" y="302" transform="rotate(33 733 302)">布置范围</text>
          <text class="gn c" x="715" y="311" transform="rotate(30 715 311)">1000</text>
          <text class="lb c" x="957" y="260" transform="rotate(-30 957 260)">桩间连接筋</text>
          <text class="gn c" x="947" y="283" transform="rotate(-30 947 283)">11C22</text>
          <text class="lb c" x="964" y="295" transform="rotate(-30 964 295)">布置范围</text>
          <text class="gn c" x="962" y="308" transform="rotate(-30 962 308)">1000</text>
          <text class="lb c" x="988" y="335">横向分布筋</text>
          <text class="gn c" x="967" y="355">XJ</text>
          <text class="gn c" x="1010" y="245" transform="rotate(-90 1010 245)">1000</text>
          <text class="gn c" x="1010" y="383" transform="rotate(-90 1010 383)">2858</text>
          <text class="gn c" x="1010" y="468" transform="rotate(-90 1010 468)">1000</text>
          <text class="big1 c" x="671" y="418">1</text>
          <text class="big1 c" x="1039" y="418">1</text>
          <text class="lb c" x="875" y="476">纵向分布筋</text>
          <text class="gn c" x="846" y="495">YJ</text>
          <text class="gn c" x="845" y="513">3300</text>
          <text class="gn c" x="709" y="526">577</text>
          <text class="gn c" x="745" y="526">577</text>
          <text class="lb c" x="901" y="537">桩间连接筋</text>
          <text class="gn c" x="963" y="537">11C22</text>
          <text class="lb c" x="893" y="556">布置范围</text>
          <text class="gn c" x="942" y="556">1000</text>
          <text class="ttl1 c" x="861" y="594">三桩承台一</text>

          <path class="ln" d="M1265 227V318M1304 227V318M1254 227H1278L1281 220L1284 234L1286 227H1313"/>
          <path class="ln" d="M1366 318H1133V411H1366"/>
          <path class="yl2" d="M1144 338V381H1366"/>
          <path class="mg2" d="M1140 352V388H1366"/>
          <path class="cy2" d="M1149 383h6M1152 380v6M1172 383h6M1175 380v6M1195 383h6M1198 380v6M1218 383h6M1221 380v6M1241 383h6M1244 380v6M1263 383h6M1266 380v6M1286 383h6M1289 380v6M1309 383h6M1312 380v6M1332 383h6M1335 380v6M1354 383h6M1357 380v6"/>
          <path class="gr2" d="M1155 389h4M1157 387v4M1162 389h4M1164 387v4M1169 389h4M1171 387v4M1175 389h4M1177 387v4M1182 389h4M1184 387v4M1189 389h4M1191 387v4M1196 389h4M1198 387v4M1355 389h4M1357 387v4M1362 389h4M1364 387v4"/>
          <path class="ln" d="M1147 543H1158V393H1197V543H1206M1158 543H1172L1176 536L1178 550L1180 543H1197"/>
          <path class="ln" d="M1251 543H1263V393H1302V543H1311M1263 543H1277L1281 536L1283 550L1285 543H1302"/>
          <path class="ln" d="M1347 543H1358V393H1366"/>
          <path class="ln" d="M1097 318V411M1091 318H1107M1091 411H1107M1119 352H1133M1124 352V388M1124 388H1133"/>
          <path class="ln" d="M1167 385V359H1190M1224 368H1283M1224 368L1222 382M1247 368L1245 382M1270 368L1268 382"/>
          <path class="ln" d="M1306 386V428H1340"/>
          <path class="ln" d="M1204 393H1211V411"/>
          <text class="gn c" x="1097" y="364" transform="rotate(-90 1097 364)">500</text>
          <text class="gn c" x="1116" y="370" transform="rotate(-90 1116 370)">0</text>
          <text class="lb c" x="1123" y="444" transform="rotate(-90 1123 444)">桩间连接筋弯折</text>
          <text class="lb c" x="1188" y="348">分布筋</text>
          <text class="lb c" x="1246" y="357">分布筋</text>
          <text class="lb" x="1333" y="373">桩间</text>
          <text class="lb" x="1308" y="426">桩间连接</text>
          <rect class="edit" x="1213.500" y="389.500" width="34" height="14"/>
          <rect class="editw" x="1240" y="390" width="7" height="13"/>
          <text class="edtx c" x="1226" y="397">100</text>
          <path class="gr2" d="M1219 404.500h7M1218 410h9M1227 407v3"/>
          <text class="ttl1 s c" x="1268" y="592">1-1</text>
          <path class="ln" d="M1231 609H1304"/>
        </svg>
        <div class="dlgfoot"></div>
      </div>
    </div>
  </main>

  <footer class="status">
    <div class="sc c1"></div>
    <div class="sc c2">层高<i>:2.15m</i></div>
    <div class="sc c3">底标高<i>:-2.2m</i></div>
    <div class="sc c4"><i>0</i></div>
    <div class="sc c5">名称在当前层当前构件类型下不允许重名</div>
    <div class="sc c6"><i>73.8 FPS</i></div>
  </footer>

  <div class="taskbar">
    <div class="start"><svg class="win"><use href="#i-win"/></svg></div>
    <div class="tsearch"><i class="ring"></i><span>在这里输入你要搜索的内容</span><svg class="tmic"><use href="#i-mic"/></svg></div>
    <div class="tk w49"><svg class="tk20"><use href="#i-tv"/></svg></div>
    <div class="tk w51"><svg class="tk22"><use href="#i-pin"/></svg></div>
    <div class="tk w52"><svg class="tk22"><use href="#i-ie"/></svg></div>
    <div class="tk w52"><svg class="tk22"><use href="#i-spi"/></svg><svg class="tbell"><use href="#i-gbell"/></svg></div>
    <div class="tk w21"><i class="tdiv"></i></div>
    <div class="tk w46"><svg class="tk22"><use href="#i-edge"/></svg></div>
    <div class="tk w47"><svg class="tk24"><use href="#i-ie2"/></svg></div>
    <div class="tk w46 un"><svg class="tk22"><use href="#i-exp"/></svg></div>
    <div class="tk w46 un"><svg class="tk24"><use href="#i-gre"/></svg></div>
    <div class="tk w46 un"><svg class="tk24"><use href="#i-g"/></svg></div>
    <div class="tk w46 un act"><svg class="tk24"><use href="#i-glod"/></svg></div>
    <div class="tray">
      <i class="tdiv d2"></i>
      <span class="link2">链接</span>
      <div class="cpu"><span>17%</span><span>CPU使用</span></div>
      <svg class="ty14 up"><use href="#i-up"/></svg>
      <svg class="ty14"><use href="#i-bell"/></svg>
      <svg class="ty18"><use href="#i-batt"/></svg>
      <svg class="ty18"><use href="#i-wifi"/></svg>
      <svg class="ty18 vol"><use href="#i-vol"/></svg>
      <svg class="ty22"><use href="#i-kb"/></svg>
      <span class="zh">中</span>
      <svg class="ty18 sg"><use href="#i-s"/></svg>
      <div class="clock"><span>11:34</span><span>2018/7/31</span></div>
      <svg class="tnote"><use href="#i-note"/></svg>
    </div>
  </div>

  <div class="badge">61</div>
  <div class="sogou">
    <svg class="sg-s"><use href="#i-s"/></svg>
    <div class="sg-bar">
      <b>中</b><b class="cm">,</b>
      <svg class="ic16"><use href="#i-smile"/></svg>
      <svg class="ic16"><use href="#i-mic2"/></svg>
      <svg class="ic16"><use href="#i-kb2"/></svg>
      <svg class="ic16"><use href="#i-per"/></svg>
      <svg class="ic16"><use href="#i-shirt"/></svg>
      <svg class="ic16"><use href="#i-wr"/></svg>
    </div>
  </div>
</div>
</body>
</html>
```
FILE: styles.css
```css
* { box-sizing: border-box; }
html, body { margin: 0; padding: 0; }
body { width: 1366px; height: 768px; overflow: hidden; background: #f0f0f0; }
.sprite { position: absolute; width: 0; height: 0; }
.app {
  position: relative; width: 1366px; height: 768px; overflow: hidden;
  display: flex; flex-direction: column;
  font: 12px/16px "Liberation Sans", "Noto Sans CJK SC", sans-serif; color: #000;
}
svg { display: block; flex: none; }
i, em { font-style: normal; }
button { font: inherit; margin: 0; padding: 0; }

/* icon sizes */
.ic12 { width: 12px; height: 12px; }
.ic12t { width: 12px; height: 12px; }
.ic14 { width: 14px; height: 14px; }
.ic16 { width: 16px; height: 16px; }
.ic18 { width: 18px; height: 18px; }

/* title */
.titlebar { height: 23px; background: #fff; display: flex; align-items: center; padding-left: 2px; color: #7a7a7a; }
.logo { width: 15px; height: 15px; margin-right: 6px; }
.ttl { white-space: nowrap; font-size: 12.7px; }
.wctl { margin-left: auto; display: flex; align-items: center; gap: 35px; padding-right: 20px; }
.wmin { width: 11px; height: 1px; background: #999; }
.wmax { width: 9px; height: 10px; border: 1px solid #888; box-shadow: 2px -2px 0 -1px #fff, 2px -2px 0 0 #888; }
.wx { width: 10px; height: 10px; }

/* menu */
.menubar { height: 32px; display: flex; align-items: center; gap: 10px; padding: 0 0 2px 7px; background: #f0f0f0; white-space: nowrap; position: relative; }
.m-svc { margin-left: 2px; }
.m-xiao { margin-left: -6px; }
.ti { display: inline-flex; align-items: center; gap: 3px; white-space: nowrap; }
.caret { display: inline-block; flex: none; width: 0; height: 0; border: 3px solid transparent; border-top: 4px solid #333; border-bottom: 0; margin-left: 6px; }
.caret.c0 { margin-left: -2px; }
.caret.ca2 { margin-left: 0; }
.news { width: 187px; height: 26px; background: #f7f8f8; color: #3a6b00; line-height: 29px; padding-left: 28px; margin: 0 -6px 0 -2px; border-radius: 3px; }
.bean { margin-left: -1px; }
.ic-bl { width: 12px; height: 16px; }
.more { font: bold 14px/14px "Liberation Sans", sans-serif; color: #222; }
.more-m { margin-left: auto; margin-right: 3px; margin-top: -6px; }

/* toolbars */
.toolbar { height: 28px; display: flex; background: #f0f0f0; }
.tbgroup { display: flex; align-items: center; height: 28px; padding-bottom: 2px; background: linear-gradient(#f7f7f7, #ececec); border-radius: 3px; flex: none; }
.tg1 { width: 150px; padding-left: 5px; gap: 6px; margin-right: 2px; }
.tg1 .save { margin-left: 4px; }
.tg1 .sep { margin: 0; }
.more-a { margin-left: 15px; margin-top: -6px; }
.tg2 { width: 551px; padding-left: 5px; gap: 8px; }
.t-first { gap: 1px; }
.more-b { margin-left: auto; margin-right: 4px; margin-top: -6px; }
.sig em { font: bold 14px/16px "Liberation Serif", serif; width: 14px; margin-right: 2px; text-align: center; }
.off { color: #8c8c8c; }
.sep { width: 1px; height: 22px; background: #c4c4c4; display: block; flex: none; }
.tg3 { flex: 1; min-width: 0; padding-left: 2px; gap: 7px; }
.tg3 .caret { margin-left: 7px; }
.tg3 .caret.ca2 { margin-left: 2px; }
.tg3 .sep { margin-right: -1px; }
.zm { margin-left: 2px; }
.combo { width: 62px; height: 22px; border: 1px solid #777; display: flex; align-items: center; padding-left: 3px; color: #8c8c8c; gap: 3px; margin-right: -4px; background: #f2f2f2; }
.tg3 .combo .caret { margin-left: 4px; }
.sq { width: 13px; height: 11px; background: #e5e5e5; border: 1px solid #ccc; display: block; }
.more-c { margin-left: auto; margin-right: 3px; margin-top: -6px; }

/* workspace */
.workspace { height: 625px; position: relative; display: flex; background: #f0f0f0; }

.nav { width: 165px; flex: none; display: flex; flex-direction: column; }
.navhead { height: 18px; display: flex; align-items: center; font-size: 12px; padding-right: 3px; border-top: 1px solid #999; border-left: 1px solid #999; background: #f2f2f2; }
.navhead span { flex: 1; }
.navhead .pin { margin-right: 7px; }
.navbtn { height: 21px; margin: 0 1px 1px 1px; width: 163px; border: 1px solid #b0b0b0; background: #efefef; display: block; text-align: center; color: #000; }
.navtools { height: 26px; margin: 2px 1px 0 2px; display: flex; gap: 6px; padding: 5px 0 0 5px; background: linear-gradient(#fafafa, #ececec); border: 1px solid #d8d8d8; }
.ic-pm { width: 22px; height: 16px; }
.tree { background: #fff; border: 2px solid #8a8a8a; border-top-width: 1px; }
.ltree { width: 162px; height: 488px; margin: 0 0 1px 2px; padding-top: 1px; overflow: hidden; }
.navbtn.b1 { margin-top: 1px; height: 20px; }

.lr, .lc, .cp, .cc { height: 16px; display: flex; align-items: center; white-space: nowrap; }
.lr span, .lc span, .cp span, .cc span { line-height: 16px; }
.lr i, .lc span i, .cp span i, .cc span i, .gr .t i, .sc i {
  font-family: "Liberation Mono", monospace; letter-spacing: -1.2px;
}
.chev { width: 10px; height: 10px; }
.stub { width: 5px; height: 0; border-top: 1px dotted #888; margin-left: 1px; display: block; }
.lr { padding-left: 5px; }
.lr .fold { width: 16px; height: 14px; margin-left: 1px; margin-right: 5px; }
.guide { display: block; width: 19px; height: 16px; border-left: 1px dotted #888; }
.elbow { display: block; height: 8px; border-left: 1px dotted #888; border-bottom: 1px dotted #888; align-self: flex-start; }
.lc { padding-left: 11px; }
.lc .elbow { width: 9px; }
.lbl { display: flex; align-items: center; height: 16px; padding-left: 3px; }
.lc .lbl { gap: 4px; width: 81px; }
.lc .hov { background: #d9d9d9; }

.mid { flex: 1; display: flex; flex-direction: column; min-width: 0; }
.midtools { height: 25px; margin: 2px 0 0 6px; padding-left: 4px; display: flex; align-items: center; gap: 7px; background: linear-gradient(#f8f8f8, #ececec); white-space: nowrap; flex: none; }
.midtools .ti { gap: 4px; }
.midtools .caret { margin-left: 1px; }
.midtools .sep { height: 20px; margin-right: -3px; }
.midtools .ti:first-child { margin-right: -3px; }
.midtools .ti:last-child { margin-left: -2px; gap: 2px; }
.floorbox { width: 61px; height: 20px; background: #fff; display: flex; align-items: center; padding-left: 2px; margin-left: -2px; }
.midtools .floorbox .caret { margin-left: 14px; }
.midbody { flex: 1; display: flex; min-height: 0; }
.compcol { width: 184px; margin-left: 6px; display: flex; flex-direction: column; padding: 7px 0 4px; flex: none; }
.searchrow { height: 25px; display: flex; align-items: flex-start; background: #fafafa; flex: none; }
.search { width: 157px; height: 24px; border: 1px solid #8a8a8a; border-width: 1px 2px 2px 1px; background: #fff; color: #8f8f8f; font-size: 14px; line-height: 20px; padding-left: 2px; }
.ic-mag { width: 18px; height: 18px; margin: 2px 0 0 4px; }
.ctree { flex: 1; display: flex; min-height: 0; border-top: 1px solid #8a8a8a; margin-top: 0; overflow: hidden; }
.rows { width: 163px; flex: none; padding-top: 1px; }
.cp { padding-left: 25px; }
.cp .stub { margin-right: 1px; margin-left: 2px; width: 3px; }
.cp .ic12t { margin-left: 1px; margin-right: 8px; }
.cc { padding-left: 30px; }
.cc .elbow { width: 9px; }
.cc.last .guide { border-left-color: transparent; }
.cc .lbl { width: 99px; gap: 9px; }
.cc .sel { background: #2f66c3; }
.vscroll { width: 16px; display: flex; flex-direction: column; background: #f0f0f0; align-items: center; justify-content: space-between; position: relative; margin-top: 1px; }
.sa { width: 10px; height: 8px; margin: 5px 0; }
.thumb { width: 15px; height: 76px; background: #c8c8c8; margin-top: auto; margin-bottom: 0; }
.vscroll .sa:first-child { margin-bottom: 0; }

.props { flex: 1; min-width: 0; padding-left: 3px; background: #fff; margin: 2px 0 4px; border-bottom: 2px solid #aaa; }
.tabbar { height: 20px; border-bottom: 1px solid #c8c8c8; }
.tab { width: 64px; height: 20px; background: #fff; border: 1px solid #c8c8c8; border-bottom: 0; line-height: 19px; text-align: center; }
.grid { margin: 5px 0 0 4px; border-top: 1px solid #999; border-left: 1px solid #999; }
.gh { height: 24px; display: flex; background: linear-gradient(#fdfdfd, #eaeaea); border-bottom: 1px solid #bdbdbd; }
.gh .n, .gr .n { width: 21px; flex: none; text-align: center; background: #efefef; border-right: 1px solid #c8c8c8; }
.gh .t { flex: 1; text-align: left; line-height: 23px; padding-left: 71px; }
.gr { height: 19px; display: flex; border-bottom: 1px solid #bdbdbd; line-height: 18px; }
.gr .n { font-family: "Liberation Mono", monospace; letter-spacing: -1px; }
.gr .t { flex: 1; padding-left: 21px; white-space: nowrap; }
.link { color: #0000e6; }
.dis { color: #8c8c8c; }
.cur .t { background: #0078d7; color: #fff; }
.cur .n { background: #ffd48c; color: #700070; }
.pbox { display: inline-block; width: 12px; height: 12px; border: 1px solid #999; font: 12px/9px "Liberation Mono", monospace; text-align: center; color: #222; margin: 0 6px 0 -18px; vertical-align: -1px; }

/* dialog */
.dialog { position: absolute; left: 555px; top: 0; right: 0; height: 607px; background: #b8cfe8; border-left: 1px solid #444; display: flex; flex-direction: column; }
.dlgtitle { height: 18px; padding-left: 7px; line-height: 14px; background: linear-gradient(#aec6e2, #bed2ea); color: #222; flex: none; }
.dlgbody { flex: 1; margin-left: 7px; margin-bottom: 8px; display: flex; flex-direction: column; background: #f0f0f0; }
.radios { height: 34px; flex: none; display: flex; align-items: center; position: relative; border-bottom: 1px solid #777; }
.rad { display: flex; align-items: center; gap: 3px; margin-left: 150px; }
.rad.r2 { margin-left: 311px; }
.rad i { display: block; width: 12px; height: 12px; border: 1px solid #555; border-radius: 50%; background: #fff; }
.rad.on i { background: radial-gradient(circle, #222 0 3px, #fff 3.500px); }
.cad { background: #000; flex: none; }
.dlgfoot { flex: 1; }

.ln { fill: none; stroke: #fff; stroke-width: 1; shape-rendering: crispEdges; }
.dashc { stroke-dasharray: 30 1.500; }
.hat { fill: none; stroke: #00ff00; stroke-width: 1; shape-rendering: crispEdges; }
.yel { fill: none; stroke: #ffff00; shape-rendering: crispEdges; }
.mag { fill: none; stroke: #ff00ff; shape-rendering: crispEdges; stroke-width: 1; }
.cy { fill: none; stroke: #22eeff; shape-rendering: crispEdges; }
.yl2 { fill: none; stroke: #ffff00; stroke-width: 2; shape-rendering: crispEdges; }
.mg2 { fill: none; stroke: #ff00ff; stroke-width: 2; shape-rendering: crispEdges; }
.cy2 { fill: none; stroke: #00ffff; shape-rendering: crispEdges; }
.gr2 { fill: none; stroke: #00ff00; shape-rendering: crispEdges; }
.red { stroke: #ff0000; stroke-width: 3; }
.redf { fill: #ff0000; }
.c { text-anchor: middle; dominant-baseline: central; }
.t-red { font: bold 21px "Noto Sans CJK SC", sans-serif; fill: #ff0000; }
.lat-b { font: bold 21px "Liberation Sans", sans-serif; }
.lb { font: 16px "Noto Sans CJK SC", sans-serif; fill: #fff; }
.gn { font: 14px "Liberation Sans", sans-serif; fill: #00ff00; }
.big1 { font: 36px "Liberation Serif", serif; fill: #fff; }
.ttl1 { font: 300 37.500px "Noto Sans CJK SC", sans-serif; fill: #fff; }
.ttl1.s { font: 36px "Liberation Serif", serif; }
.edit { fill: #0078d7; stroke: #888; }
.editw { fill: #fff; }
.edtx { font: 14px "Liberation Sans", sans-serif; fill: #fff; }

/* status */
.status { height: 20px; display: flex; gap: 2px; background: #f0f0f0; margin-top: 0; flex: none; }
.sc { height: 20px; background: #f2f2f2; border: 1px solid #dcdcdc; line-height: 19px; white-space: nowrap; padding-left: 1px; overflow: hidden; }
.c1 { width: 149px; }
.c2 { width: 78px; }
.c3 { width: 98px; }
.c4 { width: 48px; }
.c5 { width: 915px; }
.c6 { flex: 1; }

/* taskbar */
.taskbar { height: 40px; display: flex; align-items: center; background: linear-gradient(90deg, #061016 0 1297px, #000 1297px); color: #fff; position: relative; flex: none; }
.start { width: 48px; height: 40px; background: #000; display: flex; align-items: center; justify-content: center; }
.win { width: 16px; height: 16px; }
.tsearch { width: 344px; height: 40px; background: #333; display: flex; align-items: center; padding-left: 9px; color: #a0a0a0; font-size: 14px; }
.ring { display: block; width: 21px; height: 21px; border-radius: 50%; border: 3px solid #e6e6e6; margin-right: 6px; }
.tmic { width: 12px; height: 18px; margin-left: auto; margin-right: 15px; }
.tk { height: 40px; display: flex; align-items: center; justify-content: center; position: relative; flex: none; }
.w21 { width: 21px; } .w46 { width: 46px; } .w47 { width: 47px; } .w49 { width: 49px; } .w51 { width: 51px; } .w52 { width: 52px; }
.tk20 { width: 20px; height: 16px; }
.tk22 { width: 22px; height: 22px; }
.tk24 { width: 24px; height: 24px; }
.tbell { position: absolute; left: 30px; top: 3px; width: 12px; height: 14px; }
.tdiv { display: block; width: 2px; height: 18px; background: #444; }
.un::after { content: ""; position: absolute; left: 5px; right: 4px; bottom: 0; height: 2px; background: #76b9ed; }
.act { background: #3a4045; }
.act::after { left: 0; right: 0; }
.tray { flex: 1; height: 40px; display: flex; align-items: center; position: relative; padding-left: 15px; }
.tray .d2 { width: 3px; border-left: 1px solid #555; border-right: 1px solid #555; background: none; margin-right: 10px; }
.link2 { color: #c8c8c8; width: 32px; }
.cpu { width: 48px; margin-left: 13px; text-align: center; display: flex; flex-direction: column; line-height: 18px; font-size: 12px; color: #ddd; white-space: nowrap; }
.ty14 { width: 14px; height: 16px; margin-left: 11px; }
.ty14.up { margin-left: 19px; height: 10px; }
.ty18 { width: 18px; height: 16px; margin-left: 8px; }
.ty18.vol { margin-left: 3px; }
.ty18.sg { margin-left: 14px; }
.ty22 { width: 22px; height: 16px; margin-left: 9px; }
.zh { margin-left: 10px; font-size: 13px; }
.clock { margin-left: 16px; width: 58px; display: flex; flex-direction: column; align-items: flex-end; font-size: 13px; line-height: 18px; white-space: nowrap; }
.clock span:first-child { margin-right: 14px; }
.tnote { width: 16px; height: 16px; margin-left: 20px; }

/* floating overlays */
.badge { position: absolute; left: 781px; top: -22px; width: 42px; height: 42px; border-radius: 50%; background: #48ac3e; border: 2px solid #b8c4b4; box-shadow: 0 1px 2px #888; color: #fff; font: bold 12px/62px "Liberation Sans", sans-serif; text-align: center; }
.sogou { position: absolute; left: 968px; top: 3px; display: flex; align-items: center; height: 24px; }
.sg-s { width: 29px; height: 24px; }
.sg-bar { width: 178px; height: 24px; background: #fff; border: 1px solid #a9c1d9; display: flex; align-items: center; gap: 6px; padding-left: 5px; color: #1a6cc4; }
.sg-bar b { font: bold 14px/18px "Noto Sans CJK SC", sans-serif; }
.sg-bar .cm { width: 16px; }
.sg-bar .ic16 { flex: none; }
```
